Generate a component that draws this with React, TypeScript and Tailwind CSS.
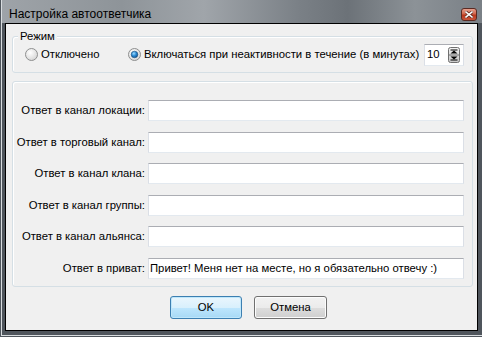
const FIELDS = [
  { label: 'Ответ в канал локации:', value: '' },
  { label: 'Ответ в торговый канал:', value: '' },
  { label: 'Ответ в канал клана:', value: '' },
  { label: 'Ответ в канал группы:', value: '' },
  { label: 'Ответ в канал альянса:', value: '' },
  { label: 'Ответ в приват:', value: 'Привет! Меня нет на месте, но я обязательно отвечу :)' },
];

function Radio({ checked }: { checked: boolean }) {
  return (
    <svg width="13" height="13" viewBox="0 0 13 13" className="flex-shrink-0">
      <defs>
        <radialGradient id={checked ? 'rOn' : 'rOff'} cx="0.4" cy="0.35" r="0.7">
          <stop offset="0" stopColor="#ffffff" />
          <stop offset="1" stopColor="#d4d4d4" />
        </radialGradient>
        <radialGradient id="dot" cx="0.4" cy="0.35" r="0.7">
          <stop offset="0" stopColor="#9fdcff" />
          <stop offset="0.5" stopColor="#2a8ad4" />
          <stop offset="1" stopColor="#0b4d8c" />
        </radialGradient>
      </defs>
      <circle cx="6.5" cy="6.5" r="6" fill={`url(#${checked ? 'rOn' : 'rOff'})`} stroke="#8e8f8f" />
      {checked && <circle cx="6.5" cy="6.5" r="3.3" fill="url(#dot)" stroke="#1d4f7c" strokeWidth="0.6" />}
    </svg>
  );
}

export default function App() {
  return (
    <div className="w-[482px] h-[337px] bg-[#4f555c] pl-px pb-px font-['Liberation_Sans',Arial,sans-serif] text-black select-none">
      <div className="h-full flex flex-col border-l border-b border-[#d8dcdf]">
        {/* title bar */}
        <div className="h-[23px] flex-shrink-0 flex items-center justify-between pl-[7px] pr-[5px] pt-[5px] bg-[linear-gradient(90deg,#9ea3a8_0%,#8e9499_25%,#a0a5aa_42%,#7a8086_62%,#6c7278_72%,#8c9297_86%,#7a8086_100%)]">
          <span className="text-[12px] leading-none">Настройка автоответчика</span>
          <div className="w-[16px] h-[13px] rounded-[3px] border border-[#5a2a22] bg-[linear-gradient(180deg,#e6a08e_0%,#d0654b_45%,#b8371c_55%,#c9553b_100%)] flex items-center justify-center">
            <svg width="8" height="7" viewBox="0 0 8 7">
              <path d="M1 1 L7 6 M7 1 L1 6" stroke="#5b2a20" strokeWidth="3" strokeLinecap="square" />
              <path d="M1 1 L7 6 M7 1 L1 6" stroke="#ffffff" strokeWidth="1.6" strokeLinecap="square" />
            </svg>
          </div>
        </div>

        {/* client */}
        <div className="flex-1 pl-[3px] pr-[4px] pb-[4px] flex">
          <div className="flex-1 border border-black bg-[#f0f0f0] flex flex-col text-[11.3px]">
            {/* Режим */}
            <div className="relative mt-[12px] ml-[6px] mr-[4px] h-[37px] border border-[#d5dfe5] rounded-[3px] shadow-[inset_1px_1px_0_#ffffff] flex items-center pl-[12px] pr-[8px]">
              <span className="absolute -top-[8px] left-[5px] px-[2px] bg-[#f0f0f0] leading-[14px]">Режим</span>
              <div className="w-[103px] flex items-center gap-[3px]">
                <Radio checked={false} />
                <span>Отключено</span>
              </div>
              <div className="flex items-center gap-[3px]">
                <Radio checked />
                <span>Включаться при неактивности в течение (в минутах)</span>
              </div>
              <div className="ml-auto w-[40px] h-[22px] bg-white border-t border-t-[#abadb3] border-x border-x-[#dbdfe6] border-b border-b-[#e3e9ef] flex items-center justify-between pl-[2px] pr-[3px]">
                <span>10</span>
                <svg width="12" height="16" viewBox="0 0 12 16">
                  <defs>
                    <linearGradient id="spin" x1="0" y1="0" x2="0" y2="1">
                      <stop offset="0" stopColor="#f4f4f4" />
                      <stop offset="0.5" stopColor="#dcdcdc" />
                      <stop offset="1" stopColor="#c8c8c8" />
                    </linearGradient>
                  </defs>
                  <rect x="0.5" y="0.5" width="11" height="15" rx="2" fill="url(#spin)" stroke="#707070" />
                  <line x1="1" y1="8" x2="11" y2="8" stroke="#707070" />
                  <path d="M2.5 3 H9.5" stroke="#000" />
                  <path d="M2.5 6.5 L6 3.5 L9.5 6.5 Z" fill="#000" />
                  <path d="M2.5 13 H9.5" stroke="#000" />
                  <path d="M2.5 9.5 L6 12.5 L9.5 9.5 Z" fill="#000" />
                </svg>
              </div>
            </div>

            {/* fields */}
            <div className="mt-[8px] ml-[6px] mr-[4px] border border-[#d5dfe5] rounded-[3px] shadow-[inset_1px_1px_0_#ffffff] pt-[18px] pb-[7px] pr-[8px] flex flex-col gap-[10.6px]">
              {FIELDS.map((f) => (
                <div key={f.label} className="flex items-center h-[21px]">
                  <span className="w-[132px] text-right whitespace-nowrap">{f.label}</span>
                  <div className="ml-[3px] flex-1 h-[21px] bg-white border-t border-t-[#abadb3] border-x border-x-[#dbdfe6] border-b border-b-[#e3e9ef] flex items-center pl-[1px]">
                    {f.value}
                  </div>
                </div>
              ))}
            </div>

            {/* buttons */}
            <div className="mt-[9px] pl-[164px] flex gap-[12px]">
              <button className="w-[72px] h-[23px] rounded-[3px] border border-[#3c7fb1] shadow-[inset_0_0_0_1px_#bfe7fb] bg-[linear-gradient(180deg,#eaf6fd_0%,#d9f0fc_50%,#bee6fd_51%,#a7d9f5_100%)]">
                OK
              </button>
              <button className="w-[73px] h-[23px] rounded-[3px] border border-[#707070] shadow-[inset_0_0_0_1px_#fcfcfc] bg-[linear-gradient(180deg,#f2f2f2_0%,#ebebeb_50%,#dddddd_51%,#cfcfcf_100%)]">
                Отмена
              </button>
            </div>
          </div>
        </div>
      </div>
    </div>
  );
}
